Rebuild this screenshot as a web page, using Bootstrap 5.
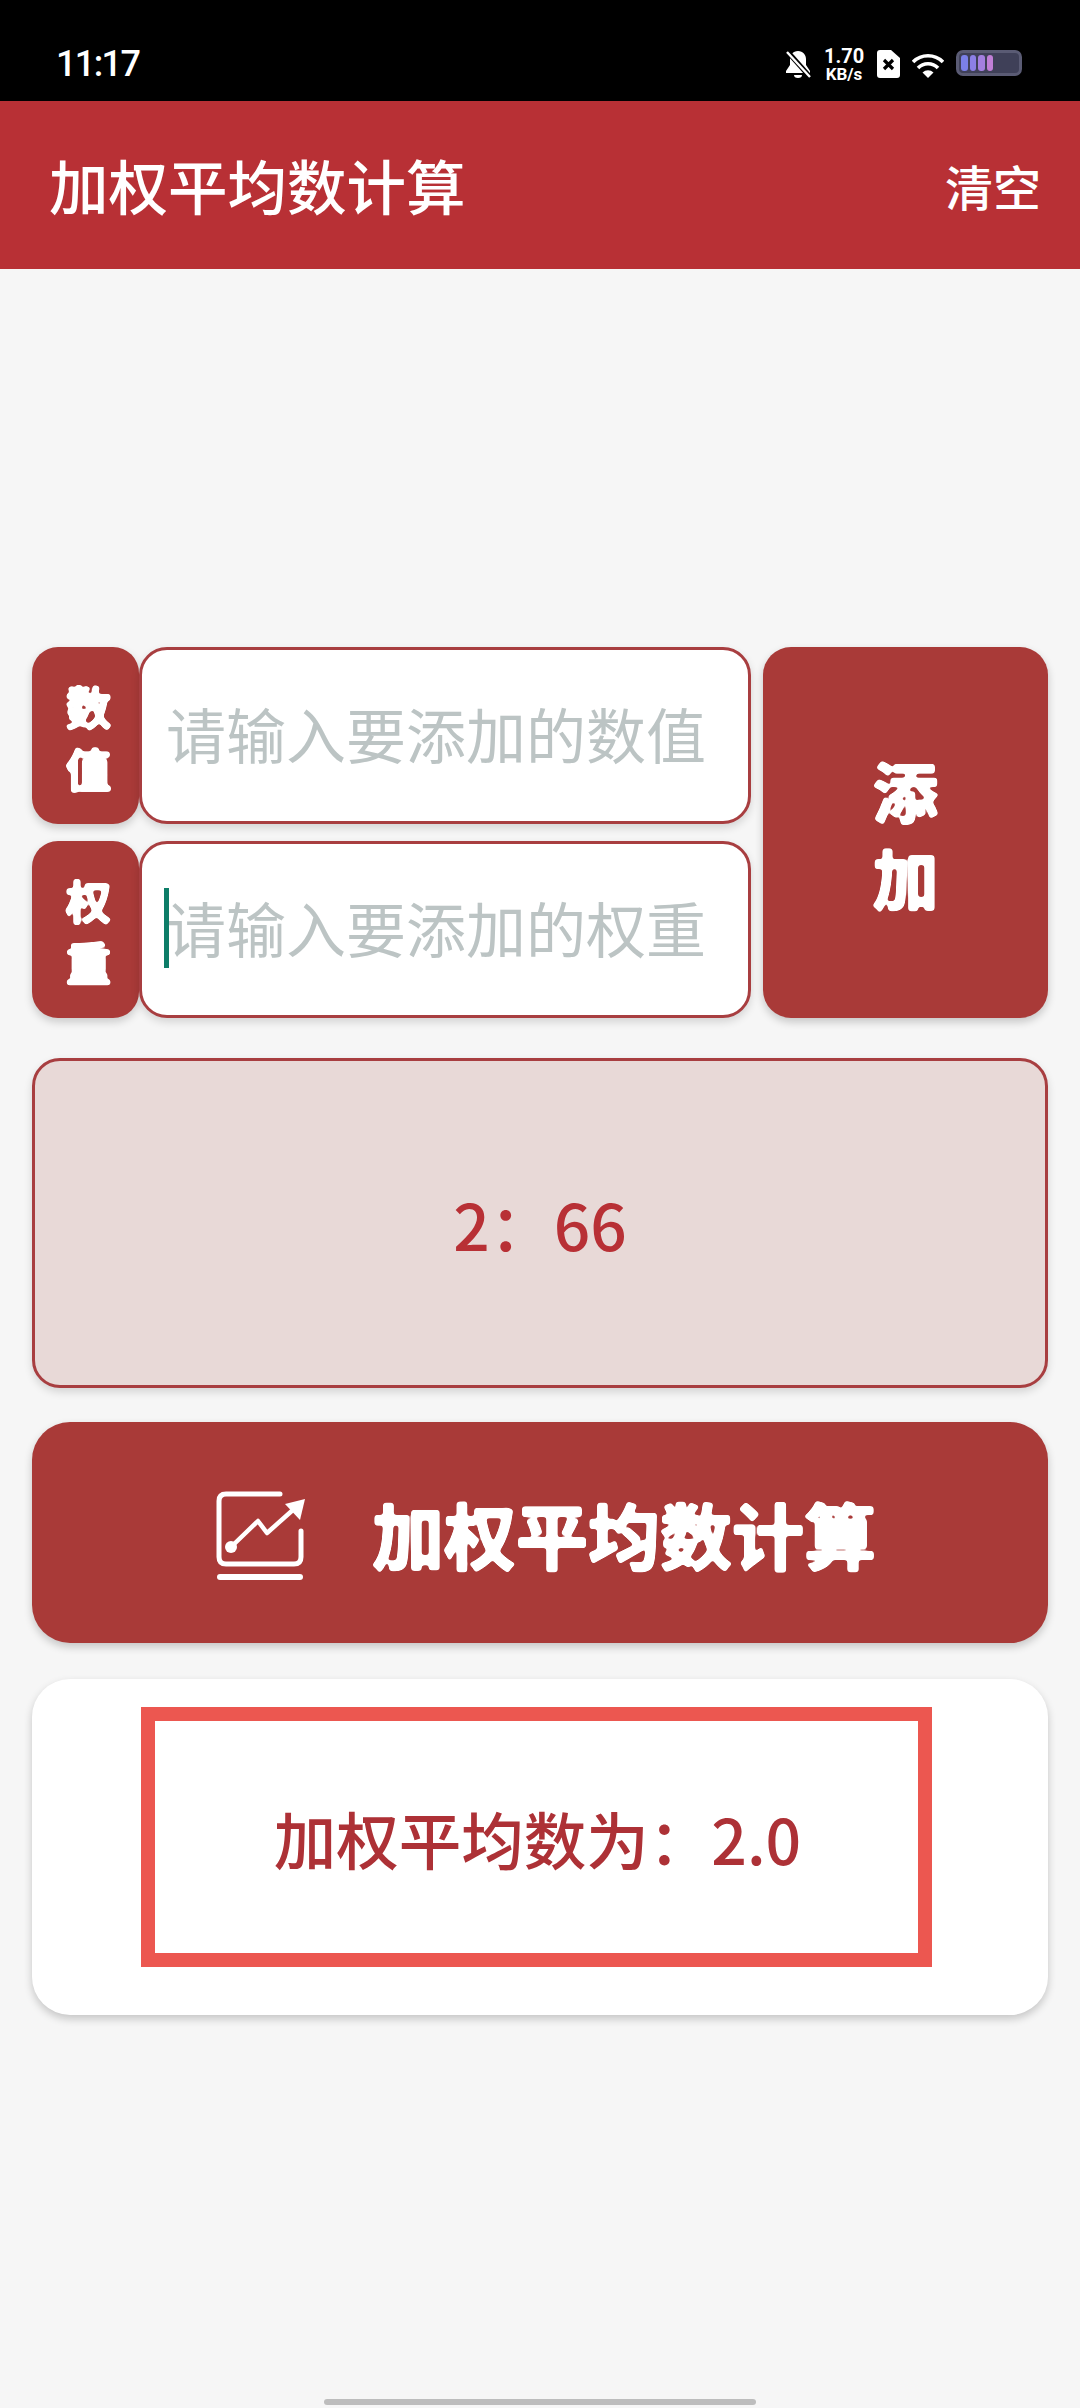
<!DOCTYPE html>
<html lang="zh-CN">
<head>
<meta charset="utf-8">
<title>加权平均数计算</title>
<link href="https://cdn.jsdelivr.net/npm/bootstrap@5.3.0/dist/css/bootstrap.min.css" rel="stylesheet">
<style>
html,body{margin:0;width:1080px;height:2408px;overflow:hidden;background:#f6f6f6;font-family:"Noto Sans CJK SC","Noto Sans",sans-serif;}
.app-shell{width:1080px;height:2408px;position:relative;}
.sys-bar{height:101px;background:#000;color:#fff;padding:0 58px 0 56px;}
.sys-time{font-family:Roboto,sans-serif;font-weight:500;font-size:36px;line-height:1;margin-top:46px;letter-spacing:-1.6px;}
.sys-icons{margin-top:46px;height:36px;}
.sys-speed{font-family:Roboto,sans-serif;font-weight:700;text-align:center;width:40px;margin:0 13px 0 13px;}
.sys-speed div:first-child{font-size:20px;line-height:20px;}
.sys-speed div:last-child{font-size:17px;line-height:17px;}
.sys-battery{width:66px;height:26px;border:3px solid #5a5b74;border-radius:7px;background:#3f4058;padding:2px;gap:2px;margin-left:12px;}
.sys-seg{width:6.5px;border-radius:3px;}
.sys-wifi{margin-left:12px;margin-top:7px;}
.app-head{height:168px;background:#b83035;color:#fff;padding:0 39px 0 49px;}
.app-title{font-size:59.5px;line-height:1;font-weight:500;}
.app-clear{font-size:48px;line-height:1;font-weight:500;}
.calc-body{padding:378px 32px 0;}
.entry-wrap{gap:12px;}
.entry-left{width:719px;gap:17px;}
.entry-row{height:177px;}
.tag-cell{flex:0 0 107px;width:107px;padding-left:6px;border-radius:26px;background:#a93a38;box-shadow:0 4px 8px rgba(0,0,0,.18);}
.tag-text{color:#fff;font-size:46px;line-height:62px;font-weight:700;text-align:center;-webkit-text-stroke:1.2px #fff;filter:url(#blobby);}
.entry-field{position:relative;flex:1 1 auto;min-width:0;}
.entry-field .form-control{height:100%;border:3px solid #a83e40;border-radius:28px;background:#fff;padding:0 0 6px 24px;font-size:60px;line-height:1;box-shadow:0 4px 8px rgba(0,0,0,.14);}
.entry-field .form-control::placeholder{color:#bcc4c4;opacity:1;}
.caret-mark{position:absolute;left:25px;top:47px;width:5px;height:80px;background:#0d7d68;}
.add-btn.btn,.calc-btn.btn{background:#a93a38;border:0;color:#fff;box-shadow:0 4px 8px rgba(0,0,0,.2);}
.add-btn.btn{flex:1 1 auto;border-radius:28px;padding:0;}
.add-text{display:block;font-size:66px;line-height:87px;font-weight:700;-webkit-text-stroke:1.6px #fff;filter:url(#blobby);}
.list-box{height:330px;margin-top:40px;background:#e8d9d7;border:3px solid #a83e40;border-radius:28px;color:#b83035;font-size:64px;line-height:1;font-weight:500;box-shadow:0 4px 8px rgba(0,0,0,.14);}
.calc-btn.btn{display:flex;width:100%;height:221px;margin-top:34px;border-radius:38px;padding:0;padding-left:184px;gap:66px;}
.calc-btn-label{font-size:72px;line-height:1;font-weight:700;-webkit-text-stroke:1.6px #fff;filter:url(#blobby);}
.calc-icon{width:90px;height:89px;display:block;margin-top:5px;}
.result-card{height:336px;margin-top:36px;background:#fff;border-radius:38px;box-shadow:0 4px 8px rgba(0,0,0,.2);padding:28px 0 0 109px;}
.result-frame{width:791px;height:260px;border:14px solid #ec5750;color:#ad3136;font-size:62.5px;line-height:1;font-weight:500;padding:3px 0 0 2px;}
.home-pill{position:absolute;left:324px;top:2399px;width:432px;height:6px;border-radius:3px;background:#bdbdbd;}
.defs-holder{position:absolute;width:0;height:0;}
</style>
</head>
<body>
<svg class="defs-holder" aria-hidden="true"><defs><filter id="blobby" x="-5%" y="-5%" width="110%" height="110%"><feGaussianBlur stdDeviation="1.6"/><feComponentTransfer><feFuncA type="linear" slope="5" intercept="-1.6"/></feComponentTransfer></filter></defs></svg>
<div class="app-shell">
  <div class="sys-bar d-flex justify-content-between align-items-start">
    <div class="sys-time">11:17</div>
    <div class="sys-icons d-flex align-items-start">
      <svg width="26" height="28" viewBox="0 0 26 28" class="mt-1"><path d="M13 1c5 0 8 4 8 8v6l4 6v2H1v-2l4-6V9c0-4 3-8 8-8zM9 25h8a4 3 0 0 1-8 0z" fill="#fff"/><path d="M2 1 25 27" stroke="#000" stroke-width="5"/><path d="M2 2 25 27" stroke="#fff" stroke-width="2.4"/></svg>
      <div class="sys-speed"><div>1.70</div><div>KB/s</div></div>
      <svg width="23" height="28" viewBox="0 0 23 28" class="mt-1"><path d="M3 0h11l9 8v17a3 3 0 0 1-3 3H3a3 3 0 0 1-3-3V3a3 3 0 0 1 3-3z" fill="#fff"/><path d="M7 10l9 9M16 10l-9 9" stroke="#000" stroke-width="3.2"/></svg>
      <svg width="32" height="26" viewBox="0 0 32 26" class="sys-wifi" fill="none" stroke="#fff" stroke-width="3.6"><path d="M1 9a21 21 0 0 1 30 0"/><path d="M6 15a14 14 0 0 1 20 0"/><path d="M16 25l-5.500-5.500a8 8 0 0 1 11 0z" fill="#fff" stroke="none"/></svg>
      <div class="sys-battery d-flex mt-1">
        <div class="sys-seg" style="background:#7b80e8"></div>
        <div class="sys-seg" style="background:#8c7fe6"></div>
        <div class="sys-seg" style="background:#a47fe0"></div>
        <div class="sys-seg" style="background:#c07fd6"></div>
      </div>
    </div>
  </div>
  <header class="app-head d-flex justify-content-between align-items-center">
    <div class="app-title">加权平均数计算</div>
    <div class="app-clear">清空</div>
  </header>
  <main class="calc-body">
    <div class="entry-wrap d-flex">
      <div class="entry-left d-flex flex-column">
        <div class="entry-row d-flex">
          <div class="tag-cell d-flex align-items-center justify-content-center"><span class="tag-text">数<br>值</span></div>
          <div class="entry-field"><input class="form-control" type="text" placeholder="请输入要添加的数值"></div>
        </div>
        <div class="entry-row d-flex">
          <div class="tag-cell d-flex align-items-center justify-content-center"><span class="tag-text">权<br>重</span></div>
          <div class="entry-field"><input class="form-control" type="text" placeholder="请输入要添加的权重"><span class="caret-mark"></span></div>
        </div>
      </div>
      <button class="btn add-btn" type="button"><span class="add-text">添<br>加</span></button>
    </div>
    <div class="list-box d-flex align-items-center justify-content-center">2：66</div>
    <button class="btn calc-btn align-items-center" type="button">
      <svg class="calc-icon" viewBox="0 0 90 89" fill="none" stroke="#fff" stroke-width="5" stroke-linecap="round" stroke-linejoin="round"><path d="M64 3H10Q3 3 3 10V66Q3 73 10 73H78Q85 73 85 66V40"/><path d="M4 86H84" stroke-width="6"/><path d="M15 56 42 30 51 42 78 18" stroke-width="4.500"/><circle cx="15" cy="56" r="6" fill="#fff" stroke="none"/><path d="M89 8 69 13 84 29z" fill="#fff" stroke="none"/></svg>
      <span class="calc-btn-label">加权平均数计算</span>
    </button>
    <section class="result-card">
      <div class="result-frame d-flex align-items-center justify-content-center">加权平均数为：2.0</div>
    </section>
  </main>
  <div class="home-pill"></div>
</div>
<script src="https://cdn.jsdelivr.net/npm/bootstrap@5.3.0/dist/js/bootstrap.bundle.min.js"></script>
</body>
</html>
